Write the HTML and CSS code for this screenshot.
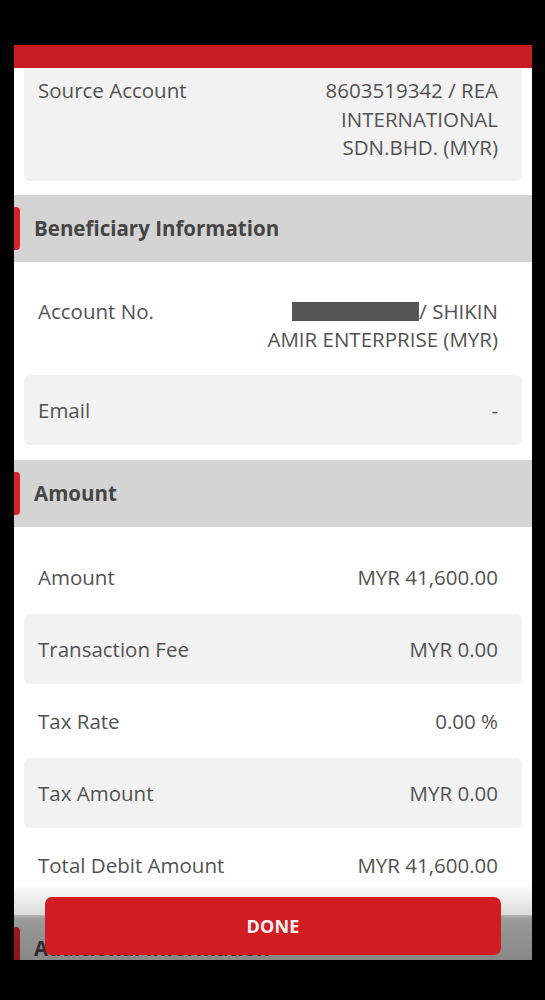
FILE: index.html
```html
<!DOCTYPE html>
<html lang="en">
<head>
<meta charset="utf-8">
<title>Transfer Receipt</title>
<link rel="stylesheet" href="styles.css">
</head>
<body>
<div class="screen">
  <div class="topbar"></div>
  <div class="content">
    <div class="row card multi source">
      <div class="label">Source Account</div>
      <div class="value">8603519342 / REA<br>INTERNATIONAL<br>SDN.BHD. (MYR)</div>
    </div>

    <div class="section-head"><span class="tab"></span><span class="head-text">Beneficiary Information</span></div>
    <div class="section-body">
      <div class="row multi acct">
        <div class="label">Account No.</div>
        <div class="value"><span class="redact"></span>/ SHIKIN<br>AMIR ENTERPRISE (MYR)</div>
      </div>
      <div class="row card">
        <div class="label">Email</div>
        <div class="value">-</div>
      </div>
    </div>

    <div class="section-head"><span class="tab"></span><span class="head-text">Amount</span></div>
    <div class="section-body">
      <div class="row">
        <div class="label">Amount</div>
        <div class="value">MYR 41,600.00</div>
      </div>
      <div class="row card">
        <div class="label">Transaction Fee</div>
        <div class="value">MYR 0.00</div>
      </div>
      <div class="row">
        <div class="label">Tax Rate</div>
        <div class="value">0.00 %</div>
      </div>
      <div class="row card">
        <div class="label">Tax Amount</div>
        <div class="value">MYR 0.00</div>
      </div>
      <div class="row">
        <div class="label">Total Debit Amount</div>
        <div class="value">MYR 41,600.00</div>
      </div>
    </div>

    <div class="section-head"><span class="tab"></span><span class="head-text">Additional Information</span></div>
  </div>
  <div class="footer">
    <button class="done">DONE</button>
  </div>
</div>
</body>
</html>
```
FILE: styles.css
```css
* { box-sizing: border-box; }
html, body { margin: 0; padding: 0; background: #000; }
body {
  font-family: "Open Sans", "Noto Sans", "Liberation Sans", sans-serif;
  width: 545px;
  height: 1000px;
  overflow: hidden;
}
.screen {
  position: relative;
  margin: 45px 0 0 14px;
  width: 518px;
  height: 915px;
  background: #ffffff;
  overflow: hidden;
}
.topbar {
  position: relative;
  z-index: 2;
  height: 23px;
  background: #c61c22;
}
.content {
  margin-top: -15px;
  display: flex;
  flex-direction: column;
}
.section-body {
  display: flex;
  flex-direction: column;
  gap: 2px;
  padding-top: 15px;
}
.row {
  display: flex;
  justify-content: space-between;
  align-items: flex-start;
  margin: 0 10px;
  padding: 21px 24px 21px 14px;
  min-height: 70px;
  font-size: 20.5px;
  line-height: 28px;
  color: #525252;
  border-radius: 6px;
}
.row.card { background: #f2f2f2; }
.row.multi { line-height: 28.5px; }
.row.source { padding-top: 23px; padding-bottom: 19px; }
.row.acct { padding-top: 20px; padding-bottom: 19px; }
.label { white-space: nowrap; }
.value { text-align: right; white-space: nowrap; }
.redact {
  display: inline-block;
  width: 127px;
  height: 19px;
  background: #555555;
  vertical-align: -2px;
}
.section-head {
  display: flex;
  align-items: center;
  height: 67px;
  margin-top: 14px;
  background: #d4d4d4;
}
.section-body + .section-head { margin-top: 15px; }
.tab {
  width: 6px;
  height: 43px;
  background: #d9232a;
  border-radius: 0 4px 4px 0;
  margin-right: 14px;
}
.head-text {
  font-size: 20.5px;
  font-weight: 700;
  color: #454545;
  white-space: nowrap;
}
.footer {
  position: absolute;
  left: 0;
  right: 0;
  bottom: 0;
  height: 73px;
  padding: 10px 31px 0 31px;
  background: linear-gradient(to bottom, rgba(0,0,0,0.02) 0%, rgba(0,0,0,0.14) 38%, rgba(0,0,0,0.28) 45%, rgba(0,0,0,0.36) 100%);
  z-index: 3;
}
.done {
  display: block;
  width: 100%;
  height: 58px;
  border: none;
  border-radius: 7px;
  background: #d11c22;
  color: #fff3f3;
  font-family: "Open Sans", "Noto Sans", "Liberation Sans", sans-serif;
  font-size: 18px;
  font-weight: 700;
  letter-spacing: 0.2px;
}
```
